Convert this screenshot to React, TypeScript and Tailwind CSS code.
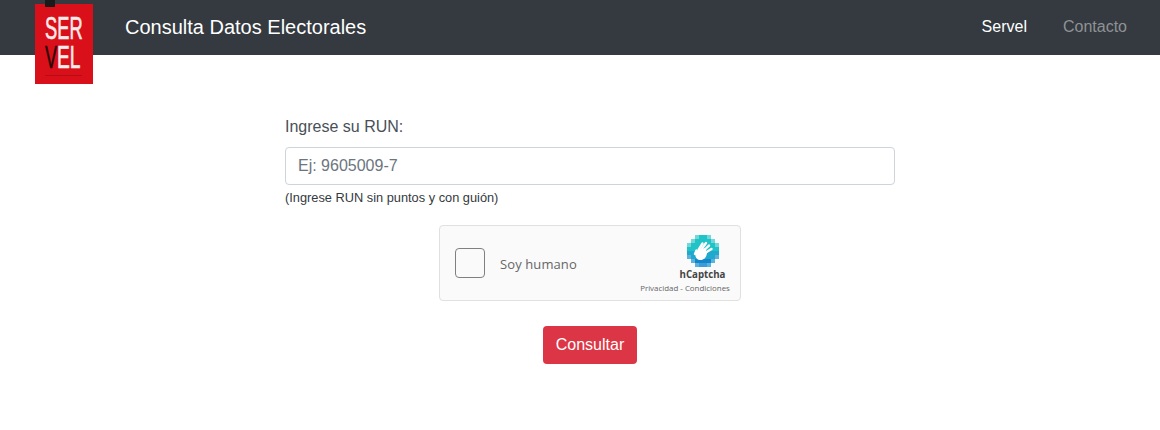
const grid = [
  "..abba..",
  ".abbbba.",
  "abbbbbba",
  "bbbbbbbb",
  "cccccccc",
  "dccccccd",
  ".deeeed.",
  "..dffd..",
];
const colors: Record<string, string> = {
  a: "#6fd8da",
  b: "#22c3c6",
  c: "#1fa9cc",
  d: "#5cb2de",
  e: "#1286c8",
  f: "#3c9bd8",
};

function HCaptchaLogo() {
  return (
    <svg width="32" height="32" viewBox="0 0 32 32" aria-hidden="true">
      {grid.map((r, y) =>
        r.split("").map((ch, x) =>
          ch === "." ? null : <rect key={`${x}-${y}`} x={x * 4} y={y * 4} width="4" height="4" fill={colors[ch]} />
        )
      )}
      <g stroke="#fff" strokeWidth="2.4" strokeLinecap="round" fill="none">
        <path d="M11.5 15 L15.5 8.5" />
        <path d="M14 15 L19 8" />
        <path d="M16.5 16 L22 10.5" />
        <path d="M18 18 L24.5 14" />
        <path d="M9.5 15.5 L8 19" />
      </g>
      <path d="M9 16 L18 13 L20 18 C19.5 22.5 17 25 13.5 25 C9.5 25 7 21 9 16 Z" fill="#fff" />
    </svg>
  );
}

export default function App() {
  return (
    <div className="min-h-[430px] bg-white font-['Liberation_Sans',Arial,sans-serif] text-[#212529]">
      <header className="relative flex h-[55px] items-center justify-between bg-[#343a40] pb-[2px] pl-[125px] pr-[33px]">
        <div className="absolute left-[35px] top-[4px] flex h-[80px] w-[58px] flex-col bg-[#d9101a] pl-[10px]">
          <div className="absolute left-[10px] top-[-4px] h-[7px] w-[10px] bg-[#1a1a1a]" />
          <div className="mt-[13px] h-[23px] whitespace-nowrap text-[31px] leading-[23px] text-[#fdeaea] [-webkit-text-stroke:0.6px_#fdeaea]">
            <span className="inline-block origin-left scale-x-[.59]">SER</span>
          </div>
          <div className="relative mt-[6px] h-[23px] whitespace-nowrap text-[31px] leading-[23px] text-[#fdeaea] [-webkit-text-stroke:0.6px_#fdeaea]">
            <span className="absolute left-0 top-0 inline-block origin-left scale-x-[.58] text-[#2a0508] [-webkit-text-stroke:0.6px_#2a0508]">V</span>
            <span className="absolute left-[12px] top-0 inline-block origin-left scale-x-[.62]">EL</span>
          </div>
          <div className="mt-[6px] h-px w-[37px] bg-[#b30d16]" />
        </div>
        <h1 className="text-[20px] leading-[30px] text-white">Consulta Datos Electorales</h1>
        <nav className="flex gap-[36px] text-[16px] leading-6">
          <a className="text-white">Servel</a>
          <a className="text-[#8f9295]">Contacto</a>
        </nav>
      </header>

      <main className="ml-[285px] flex w-[610px] flex-col pt-[60px]">
        <label className="text-[16px] leading-6 text-[#495057]">Ingrese su RUN:</label>
        <div className="mt-[8px] flex h-[38px] items-center rounded-[4px] border border-[#ced4da] bg-white px-[12px] text-[16px] text-[#6c757d]">
          Ej: 9605009-7
        </div>
        <small className="mt-[4px] text-[12.8px] leading-[18px] text-[#343a40]">(Ingrese RUN sin puntos y con guión)</small>

        <div className="mt-[18px] flex h-[76px] w-[302px] items-center self-center rounded-[4px] border border-[#e0e0e0] bg-[#fafafa] pl-[15px] pr-[10px]">
          <div className="h-[30px] w-[30px] rounded-[4px] border border-[#808080] bg-[#fafafa]" />
          <span className="ml-[15px] mt-[3px] font-['Open_Sans',sans-serif] text-[13px] tracking-[0.1px] text-[#666]">Soy humano</span>
          <div className="ml-auto flex w-[90px] flex-col items-center pt-[2px]">
            <div className="ml-[36px] h-[32px]">
              <HCaptchaLogo />
            </div>
            <span className="ml-[35px] mt-[1px] font-['Open_Sans',sans-serif] text-[9.7px] font-bold leading-[14px] text-[#444]">hCaptcha</span>
            <span className="whitespace-nowrap font-['Open_Sans',sans-serif] text-[7.9px] leading-[12px] text-[#666]">Privacidad - Condiciones</span>
          </div>
        </div>

        <button className="mt-[25px] h-[38px] w-[94px] self-center rounded-[4px] bg-[#dc3545] text-[16px] text-white">Consultar</button>
      </main>
    </div>
  );
}
